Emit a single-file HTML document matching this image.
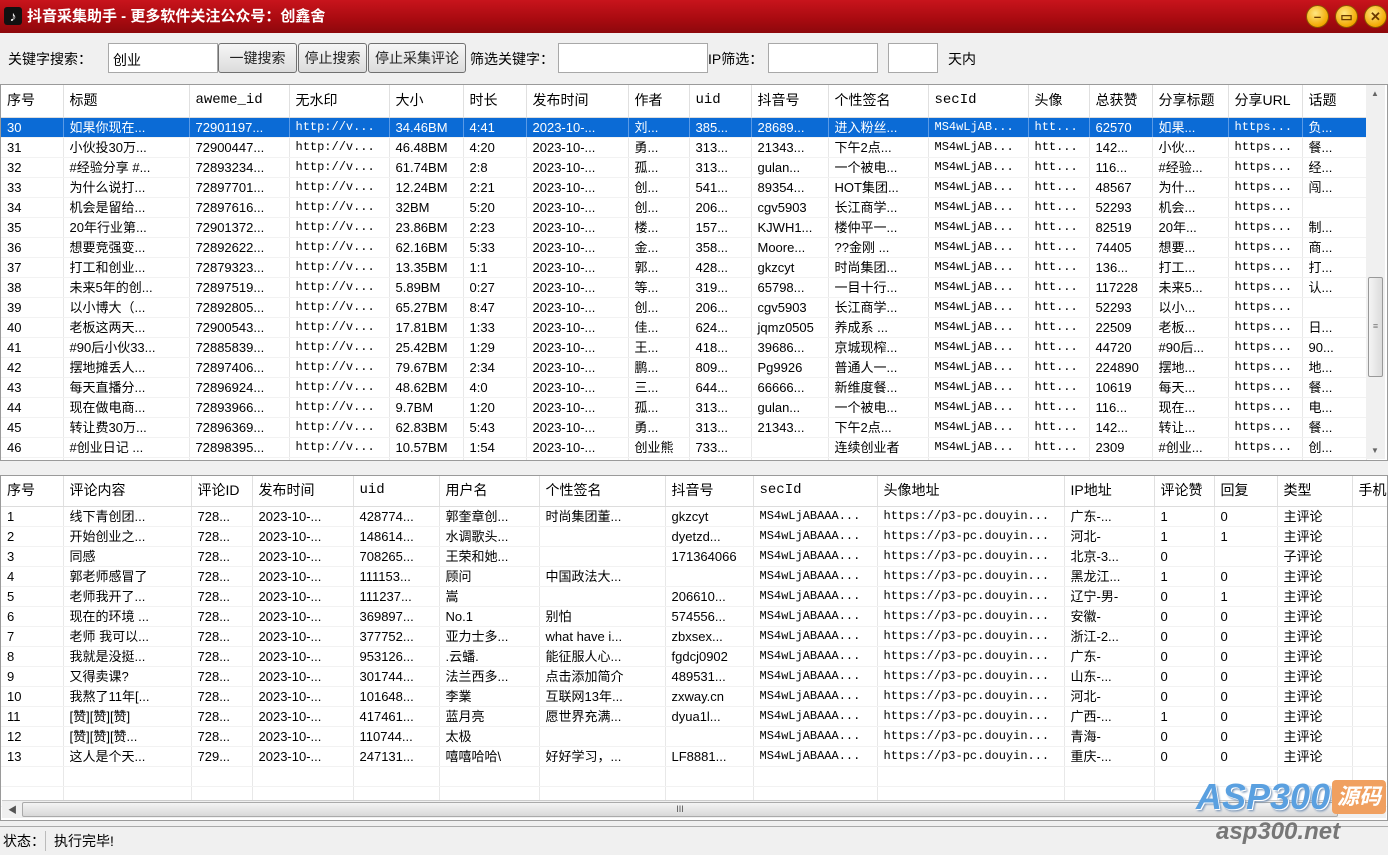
<!DOCTYPE html><html><head><meta charset="utf-8"><style>
*{margin:0;padding:0;box-sizing:border-box}
body{width:1388px;height:854px;overflow:hidden;background:#f0f0f0;font-family:"Liberation Sans","Noto Sans CJK SC",sans-serif;font-size:14px;color:#000;position:relative}
.title{position:absolute;left:0;top:0;width:1388px;height:33px;background:linear-gradient(#c8141c,#a80a10 60%,#8c080c);color:#fff;font-weight:bold;font-size:15px;line-height:33px;padding-left:27px}
.logo{position:absolute;left:4px;top:7px;width:18px;height:18px;background:#111;border-radius:3px;color:#fff;font-size:14px;line-height:18px;text-align:center}
.wb{position:absolute;top:5px;width:23px;height:23px;border-radius:50%;background:radial-gradient(circle at 40% 35%,#ffe680,#f2a800 70%,#c07800);border:1px solid #8a5200;color:#6a3a00;font-size:13px;font-weight:bold;text-align:center;line-height:21px}
.tb{position:absolute;top:33px;left:0;width:1388px;height:50px;background:#f0f0f0}
.lbl{position:absolute;top:49px;font-size:14px}
.inp{position:absolute;top:43px;height:30px;background:#fff;border:1px solid #a8a8a8;padding:6px 4px;font-size:14px}
.btn{position:absolute;top:43px;height:30px;border:1px solid #707070;border-radius:3px;background:linear-gradient(#f6f6f6,#dcdcdc);text-align:center;line-height:28px;font-size:14px;color:#222}
.grid{position:absolute;background:#fff;border:1px solid #9a9a9a;overflow:hidden}
table{border-collapse:collapse;table-layout:fixed}
td{height:20px;line-height:19px;padding:0 0 0 6px;white-space:nowrap;overflow:hidden;border-right:1px solid #e8e8e8;border-bottom:1px solid #f2f2f2;font-size:13px}
tr.h td{height:32px;line-height:31px;font-size:14px;border-right:1px solid #e0e0e0;border-bottom:1px solid #ddd;background:#fff}
.b tr.h td{height:30px;line-height:29px}
tr.s td{background:#0b6bd6;color:#fff;border-right-color:#5a9ae6}
.m{font-family:"Liberation Mono",monospace;font-size:12px}
.vs{position:absolute;left:1366px;top:85px;width:19px;height:374px;background:#f0f0f0}
.hs{position:absolute;left:2px;top:800px;width:1384px;height:18px;background:#f0f0f0;border-top:1px solid #ccc}
.st{position:absolute;left:0;top:826px;width:1388px;height:28px;border-top:1px solid #aaa;background:#f0f0f0;line-height:28px}
</style></head><body>
<div class="title"><div class="logo">♪</div>抖音采集助手 - 更多软件关注公众号：创鑫舍
<div class="wb" style="left:1306px">–</div><div class="wb" style="left:1335px">▭</div><div class="wb" style="left:1364px">✕</div></div>
<div class="tb"></div>
<div class="lbl" style="left:8px">关键字搜索：</div>
<div class="inp" style="left:108px;width:110px">创业</div>
<div class="btn" style="left:218px;width:79px">一键搜索</div>
<div class="btn" style="left:298px;width:69px">停止搜索</div>
<div class="btn" style="left:368px;width:98px">停止采集评论</div>
<div class="lbl" style="left:470px">筛选关键字：</div>
<div class="inp" style="left:558px;width:150px"></div>
<div class="lbl" style="left:708px">IP筛选：</div>
<div class="inp" style="left:768px;width:110px"></div>
<div class="inp" style="left:888px;width:50px"></div>
<div class="lbl" style="left:948px">天内</div>

<div class="grid" style="left:0;top:84px;width:1388px;height:377px">
<table style="width:1365px">
<colgroup><col style="width:62px"><col style="width:126px"><col style="width:100px"><col style="width:100px"><col style="width:74px"><col style="width:63px"><col style="width:102px"><col style="width:61px"><col style="width:62px"><col style="width:77px"><col style="width:100px"><col style="width:100px"><col style="width:61px"><col style="width:63px"><col style="width:76px"><col style="width:74px"><col style="width:64px"></colgroup>
<tr class="h"><td>序号</td><td>标题</td><td class="m">aweme_id</td><td>无水印</td><td>大小</td><td>时长</td><td>发布时间</td><td>作者</td><td class="m">uid</td><td>抖音号</td><td>个性签名</td><td class="m">secId</td><td>头像</td><td>总获赞</td><td>分享标题</td><td>分享URL</td><td>话题</td></tr>
<tr class="s"><td>30</td><td>如果你现在...</td><td>72901197...</td><td class="m">http://v...</td><td>34.46BM</td><td>4:41</td><td>2023-10-...</td><td>刘...</td><td>385...</td><td>28689...</td><td>进入粉丝...</td><td class="m">MS4wLjAB...</td><td class="m">htt...</td><td>62570</td><td>如果...</td><td class="m">https...</td><td>负...</td></tr>
<tr><td>31</td><td>小伙投30万...</td><td>72900447...</td><td class="m">http://v...</td><td>46.48BM</td><td>4:20</td><td>2023-10-...</td><td>勇...</td><td>313...</td><td>21343...</td><td>下午2点...</td><td class="m">MS4wLjAB...</td><td class="m">htt...</td><td>142...</td><td>小伙...</td><td class="m">https...</td><td>餐...</td></tr>
<tr><td>32</td><td>#经验分享 #...</td><td>72893234...</td><td class="m">http://v...</td><td>61.74BM</td><td>2:8</td><td>2023-10-...</td><td>孤...</td><td>313...</td><td>gulan...</td><td>一个被电...</td><td class="m">MS4wLjAB...</td><td class="m">htt...</td><td>116...</td><td>#经验...</td><td class="m">https...</td><td>经...</td></tr>
<tr><td>33</td><td>为什么说打...</td><td>72897701...</td><td class="m">http://v...</td><td>12.24BM</td><td>2:21</td><td>2023-10-...</td><td>创...</td><td>541...</td><td>89354...</td><td>HOT集团...</td><td class="m">MS4wLjAB...</td><td class="m">htt...</td><td>48567</td><td>为什...</td><td class="m">https...</td><td>闯...</td></tr>
<tr><td>34</td><td>机会是留给...</td><td>72897616...</td><td class="m">http://v...</td><td>32BM</td><td>5:20</td><td>2023-10-...</td><td>创...</td><td>206...</td><td>cgv5903</td><td>长江商学...</td><td class="m">MS4wLjAB...</td><td class="m">htt...</td><td>52293</td><td>机会...</td><td class="m">https...</td><td></td></tr>
<tr><td>35</td><td>20年行业第...</td><td>72901372...</td><td class="m">http://v...</td><td>23.86BM</td><td>2:23</td><td>2023-10-...</td><td>楼...</td><td>157...</td><td>KJWH1...</td><td>楼仲平一...</td><td class="m">MS4wLjAB...</td><td class="m">htt...</td><td>82519</td><td>20年...</td><td class="m">https...</td><td>制...</td></tr>
<tr><td>36</td><td>想要竞强变...</td><td>72892622...</td><td class="m">http://v...</td><td>62.16BM</td><td>5:33</td><td>2023-10-...</td><td>金...</td><td>358...</td><td>Moore...</td><td>??金刚 ...</td><td class="m">MS4wLjAB...</td><td class="m">htt...</td><td>74405</td><td>想要...</td><td class="m">https...</td><td>商...</td></tr>
<tr><td>37</td><td>打工和创业...</td><td>72879323...</td><td class="m">http://v...</td><td>13.35BM</td><td>1:1</td><td>2023-10-...</td><td>郭...</td><td>428...</td><td>gkzcyt</td><td>时尚集团...</td><td class="m">MS4wLjAB...</td><td class="m">htt...</td><td>136...</td><td>打工...</td><td class="m">https...</td><td>打...</td></tr>
<tr><td>38</td><td>未来5年的创...</td><td>72897519...</td><td class="m">http://v...</td><td>5.89BM</td><td>0:27</td><td>2023-10-...</td><td>等...</td><td>319...</td><td>65798...</td><td>一目十行...</td><td class="m">MS4wLjAB...</td><td class="m">htt...</td><td>117228</td><td>未来5...</td><td class="m">https...</td><td>认...</td></tr>
<tr><td>39</td><td>以小博大（...</td><td>72892805...</td><td class="m">http://v...</td><td>65.27BM</td><td>8:47</td><td>2023-10-...</td><td>创...</td><td>206...</td><td>cgv5903</td><td>长江商学...</td><td class="m">MS4wLjAB...</td><td class="m">htt...</td><td>52293</td><td>以小...</td><td class="m">https...</td><td></td></tr>
<tr><td>40</td><td>老板这两天...</td><td>72900543...</td><td class="m">http://v...</td><td>17.81BM</td><td>1:33</td><td>2023-10-...</td><td>佳...</td><td>624...</td><td>jqmz0505</td><td>养成系 ...</td><td class="m">MS4wLjAB...</td><td class="m">htt...</td><td>22509</td><td>老板...</td><td class="m">https...</td><td>日...</td></tr>
<tr><td>41</td><td>#90后小伙33...</td><td>72885839...</td><td class="m">http://v...</td><td>25.42BM</td><td>1:29</td><td>2023-10-...</td><td>王...</td><td>418...</td><td>39686...</td><td>京城现榨...</td><td class="m">MS4wLjAB...</td><td class="m">htt...</td><td>44720</td><td>#90后...</td><td class="m">https...</td><td>90...</td></tr>
<tr><td>42</td><td>摆地摊丢人...</td><td>72897406...</td><td class="m">http://v...</td><td>79.67BM</td><td>2:34</td><td>2023-10-...</td><td>鹏...</td><td>809...</td><td>Pg9926</td><td>普通人一...</td><td class="m">MS4wLjAB...</td><td class="m">htt...</td><td>224890</td><td>摆地...</td><td class="m">https...</td><td>地...</td></tr>
<tr><td>43</td><td>每天直播分...</td><td>72896924...</td><td class="m">http://v...</td><td>48.62BM</td><td>4:0</td><td>2023-10-...</td><td>三...</td><td>644...</td><td>66666...</td><td>新维度餐...</td><td class="m">MS4wLjAB...</td><td class="m">htt...</td><td>10619</td><td>每天...</td><td class="m">https...</td><td>餐...</td></tr>
<tr><td>44</td><td>现在做电商...</td><td>72893966...</td><td class="m">http://v...</td><td>9.7BM</td><td>1:20</td><td>2023-10-...</td><td>孤...</td><td>313...</td><td>gulan...</td><td>一个被电...</td><td class="m">MS4wLjAB...</td><td class="m">htt...</td><td>116...</td><td>现在...</td><td class="m">https...</td><td>电...</td></tr>
<tr><td>45</td><td>转让费30万...</td><td>72896369...</td><td class="m">http://v...</td><td>62.83BM</td><td>5:43</td><td>2023-10-...</td><td>勇...</td><td>313...</td><td>21343...</td><td>下午2点...</td><td class="m">MS4wLjAB...</td><td class="m">htt...</td><td>142...</td><td>转让...</td><td class="m">https...</td><td>餐...</td></tr>
<tr><td>46</td><td>#创业日记 ...</td><td>72898395...</td><td class="m">http://v...</td><td>10.57BM</td><td>1:54</td><td>2023-10-...</td><td>创业熊</td><td>733...</td><td></td><td>连续创业者</td><td class="m">MS4wLjAB...</td><td class="m">htt...</td><td>2309</td><td>#创业...</td><td class="m">https...</td><td>创...</td></tr>
<tr><td></td><td>没人后悔...</td><td></td><td class="m">http://v...</td><td></td><td></td><td></td><td></td><td></td><td></td><td></td><td></td><td></td><td></td><td></td><td></td><td></td></tr>
</table></div>
<div class="vs"><div style="position:absolute;top:4px;left:5px;font-size:8px;color:#666">▲</div><div style="position:absolute;top:192px;left:2px;width:15px;height:100px;background:linear-gradient(90deg,#f4f4f4,#dcdcdc);border:1px solid #999;border-radius:2px;text-align:center;line-height:96px;font-size:9px;color:#777">≡</div><div style="position:absolute;bottom:4px;left:5px;font-size:8px;color:#666">▼</div></div>

<div class="grid b" style="left:0;top:475px;width:1388px;height:346px">
<table style="width:1400px">
<colgroup><col style="width:62px"><col style="width:128px"><col style="width:61px"><col style="width:101px"><col style="width:86px"><col style="width:100px"><col style="width:126px"><col style="width:88px"><col style="width:124px"><col style="width:187px"><col style="width:90px"><col style="width:60px"><col style="width:63px"><col style="width:75px"><col style="width:49px"></colgroup>
<tr class="h"><td>序号</td><td>评论内容</td><td>评论ID</td><td>发布时间</td><td class="m">uid</td><td>用户名</td><td>个性签名</td><td>抖音号</td><td class="m">secId</td><td>头像地址</td><td>IP地址</td><td>评论赞</td><td>回复</td><td>类型</td><td>手机</td></tr>
<tr><td>1</td><td>线下青创团...</td><td>728...</td><td>2023-10-...</td><td>428774...</td><td>郭奎章创...</td><td>时尚集团董...</td><td>gkzcyt</td><td class="m">MS4wLjABAAA...</td><td class="m">https://p3-pc.douyin...</td><td>广东-...</td><td>1</td><td>0</td><td>主评论</td><td></td></tr>
<tr><td>2</td><td>开始创业之...</td><td>728...</td><td>2023-10-...</td><td>148614...</td><td>水调歌头...</td><td></td><td>dyetzd...</td><td class="m">MS4wLjABAAA...</td><td class="m">https://p3-pc.douyin...</td><td>河北-</td><td>1</td><td>1</td><td>主评论</td><td></td></tr>
<tr><td>3</td><td>同感</td><td>728...</td><td>2023-10-...</td><td>708265...</td><td>王荣和她...</td><td></td><td>171364066</td><td class="m">MS4wLjABAAA...</td><td class="m">https://p3-pc.douyin...</td><td>北京-3...</td><td>0</td><td></td><td>子评论</td><td></td></tr>
<tr><td>4</td><td>郭老师感冒了</td><td>728...</td><td>2023-10-...</td><td>111153...</td><td>顾问</td><td>中国政法大...</td><td></td><td class="m">MS4wLjABAAA...</td><td class="m">https://p3-pc.douyin...</td><td>黑龙江...</td><td>1</td><td>0</td><td>主评论</td><td></td></tr>
<tr><td>5</td><td>老师我开了...</td><td>728...</td><td>2023-10-...</td><td>111237...</td><td>嵩</td><td></td><td>206610...</td><td class="m">MS4wLjABAAA...</td><td class="m">https://p3-pc.douyin...</td><td>辽宁-男-</td><td>0</td><td>1</td><td>主评论</td><td></td></tr>
<tr><td>6</td><td>现在的环境 ...</td><td>728...</td><td>2023-10-...</td><td>369897...</td><td>No.1</td><td>别怕</td><td>574556...</td><td class="m">MS4wLjABAAA...</td><td class="m">https://p3-pc.douyin...</td><td>安徽-</td><td>0</td><td>0</td><td>主评论</td><td></td></tr>
<tr><td>7</td><td>老师 我可以...</td><td>728...</td><td>2023-10-...</td><td>377752...</td><td>亚力士多...</td><td>what have i...</td><td>zbxsex...</td><td class="m">MS4wLjABAAA...</td><td class="m">https://p3-pc.douyin...</td><td>浙江-2...</td><td>0</td><td>0</td><td>主评论</td><td></td></tr>
<tr><td>8</td><td>我就是没挺...</td><td>728...</td><td>2023-10-...</td><td>953126...</td><td>.云蟠.</td><td>能征服人心...</td><td>fgdcj0902</td><td class="m">MS4wLjABAAA...</td><td class="m">https://p3-pc.douyin...</td><td>广东-</td><td>0</td><td>0</td><td>主评论</td><td></td></tr>
<tr><td>9</td><td>又得卖课?</td><td>728...</td><td>2023-10-...</td><td>301744...</td><td>法兰西多...</td><td>点击添加简介</td><td>489531...</td><td class="m">MS4wLjABAAA...</td><td class="m">https://p3-pc.douyin...</td><td>山东-...</td><td>0</td><td>0</td><td>主评论</td><td></td></tr>
<tr><td>10</td><td>我熬了11年[...</td><td>728...</td><td>2023-10-...</td><td>101648...</td><td>李業</td><td>互联网13年...</td><td>zxway.cn</td><td class="m">MS4wLjABAAA...</td><td class="m">https://p3-pc.douyin...</td><td>河北-</td><td>0</td><td>0</td><td>主评论</td><td></td></tr>
<tr><td>11</td><td>[赞][赞][赞]</td><td>728...</td><td>2023-10-...</td><td>417461...</td><td>蓝月亮</td><td>愿世界充满...</td><td>dyua1l...</td><td class="m">MS4wLjABAAA...</td><td class="m">https://p3-pc.douyin...</td><td>广西-...</td><td>1</td><td>0</td><td>主评论</td><td></td></tr>
<tr><td>12</td><td>[赞][赞][赞...</td><td>728...</td><td>2023-10-...</td><td>110744...</td><td>太极</td><td></td><td></td><td class="m">MS4wLjABAAA...</td><td class="m">https://p3-pc.douyin...</td><td>青海-</td><td>0</td><td>0</td><td>主评论</td><td></td></tr>
<tr><td>13</td><td>这人是个天...</td><td>729...</td><td>2023-10-...</td><td>247131...</td><td>嘻嘻哈哈\</td><td>好好学习，...</td><td>LF8881...</td><td class="m">MS4wLjABAAA...</td><td class="m">https://p3-pc.douyin...</td><td>重庆-...</td><td>0</td><td>0</td><td>主评论</td><td></td></tr>
<tr><td></td><td></td><td></td><td></td><td></td><td></td><td></td><td></td><td></td><td></td><td></td><td></td><td></td><td></td><td></td></tr>
<tr><td></td><td></td><td></td><td></td><td></td><td></td><td></td><td></td><td></td><td></td><td></td><td></td><td></td><td></td><td></td></tr>
</table></div>
<div class="hs"><div style="position:absolute;left:20px;top:1px;width:1316px;height:15px;background:linear-gradient(#f4f4f4,#d8d8d8);border:1px solid #aaa;border-radius:2px;text-align:center;font-size:9px;line-height:13px;color:#555">III</div><div style="position:absolute;left:6px;top:2px;font-size:9px;color:#555">◀</div></div>
<div style="position:absolute;left:1196px;top:776px;font:italic bold 36px 'Liberation Sans',sans-serif;color:#5aa0e0;text-shadow:1px 1px 0 #fff,2px 2px 2px #6a8ab0">ASP300</div>
<div style="position:absolute;left:1332px;top:780px;width:54px;height:34px;background:#f0a060;border-radius:4px;color:#fff;font:italic bold 22px 'Liberation Sans','Noto Sans CJK SC',sans-serif;line-height:34px;text-align:center">源码</div>
<div class="st"><span style="padding-left:3px">状态：</span><span style="position:absolute;left:45px;top:4px;height:20px;border-left:1px solid #bbb"></span><span style="position:absolute;left:54px">执行完毕!</span></div>
<div style="position:absolute;left:1216px;top:818px;font:italic bold 24px 'Liberation Sans',sans-serif;color:#777">asp300.net</div>
</body></html>
